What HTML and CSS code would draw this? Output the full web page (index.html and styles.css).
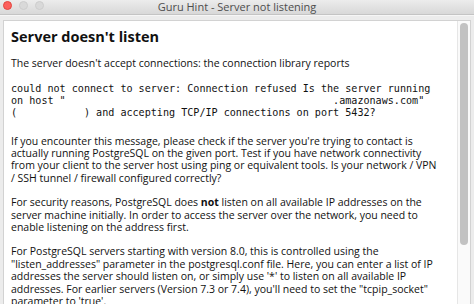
FILE: index.html
```html
<!DOCTYPE html>
<html>
    <head>
        <meta charset="UTF-8">
        <meta name="viewport" content="width=device-width, initial-scale=1.0">
        <title>Guru Hint - Server not listening</title>
        <link rel="stylesheet" href="styles.css">
    </head>
    <body>
        <div class="window">
            <div class="titlebar">
                <div class="lights">
                    <span class="light close"></span>
                    <span class="light"></span>
                    <span class="light"></span>
                </div>
                <div class="window-title">Guru Hint - Server not listening</div>
            </div>
            <div class="frame">
                <div class="panel">
                    <div class="hint">
                        <h1>Server doesn't listen</h1>
                        <p>The server doesn't accept connections: the connection library reports</p>
<pre>could not connect to server: Connection refused Is the server running
on host "                                            .amazonaws.com"
(           ) and accepting TCP/IP connections on port 5432?</pre>
                        <!-- keep the line breaks of the hint viewer -->
                        <p>If you encounter this message, please check if the server you're trying to contact is<br>
                        actually running PostgreSQL on the given port. Test if you have network connectivity<br>
                        from your client to the server host using ping or equivalent tools. Is your network / VPN<br>
                        / SSH tunnel / firewall configured correctly?</p>
                        <p>For security reasons, PostgreSQL does <b>not</b> listen on all available IP addresses on the<br>
                        server machine initially. In order to access the server over the network, you need to<br>
                        enable listening on the address first.</p>
                        <p>For PostgreSQL servers starting with version 8.0, this is controlled using the<br>
                        "listen_addresses" parameter in the postgresql.conf file. Here, you can enter a list of IP<br>
                        addresses the server should listen on, or simply use '*' to listen on all available IP<br>
                        addresses. For earlier servers (Version 7.3 or 7.4), you'll need to set the "tcpip_socket"<br>
                        parameter to 'true'.</p>
                    </div>
                    <div class="scroll-track">
                        <div class="scroll-thumb"></div>
                    </div>
                </div>
            </div>
        </div>
    </body>
</html>
```

FILE: styles.css
```css
* {
    margin: 0;
    padding: 0;
    box-sizing: border-box;
}
html, body {
    height: 100%;
    overflow: hidden;
}
body {
    font-family: "Open Sans", sans-serif;
    background-color: #ececec;
    color: #111;
}
.window {
    height: 100%;
    display: flex;
    flex-direction: column;
}
.titlebar {
    height: 15px;
    flex: none;
    position: relative;
    display: flex;
    align-items: center;
    justify-content: center;
    background: linear-gradient(#ececec, #d8d8d8);
    border-bottom: 1px solid #c4c4c4;
}
.lights {
    position: absolute;
    left: 3px;
    top: 1px;
    display: flex;
    gap: 7px;
}
.light {
    width: 9px;
    height: 9px;
    border-radius: 50%;
    background-color: #d9d9d9;
    border: 1px solid #cdcdcd;
}
.light.close {
    background-color: #fc605c;
    border-color: #e2463f;
}
.window-title {
    font-size: 11px;
    color: #4d4d4d;
    margin-top: -1px;
}
.frame {
    flex: 1;
    min-height: 0;
    padding: 4px 3px 0 3px;
    border-top: 1px solid #f6f6f6;
}
.panel {
    height: 100%;
    display: flex;
    background-color: #fff;
    border: 1px solid #d2d2d2;
    border-bottom: none;
    overflow: hidden;
}
.hint {
    flex: 1;
    min-width: 0;
    padding: 7px 0 0 7px;
}
h1 {
    font-size: 14.5px;
    font-weight: 700;
    line-height: 18px;
    margin-bottom: 10.5px;
}
p {
    font-size: 10.5px;
    line-height: 12.4px;
    margin-bottom: 12px;
    white-space: nowrap;
}
pre {
    font-family: "DejaVu Sans Mono", monospace;
    font-size: 10.1px;
    line-height: 12.2px;
    margin-top: 14px;
    margin-bottom: 15px;
}
.scroll-track {
    width: 13px;
    flex: none;
    background-color: #fafafa;
    border-left: 1px solid #e6e6e6;
    padding: 2px 2px 0 2px;
}
.scroll-thumb {
    height: 222px;
    border-radius: 4px;
    background-color: #c2c2c2;
}
```
